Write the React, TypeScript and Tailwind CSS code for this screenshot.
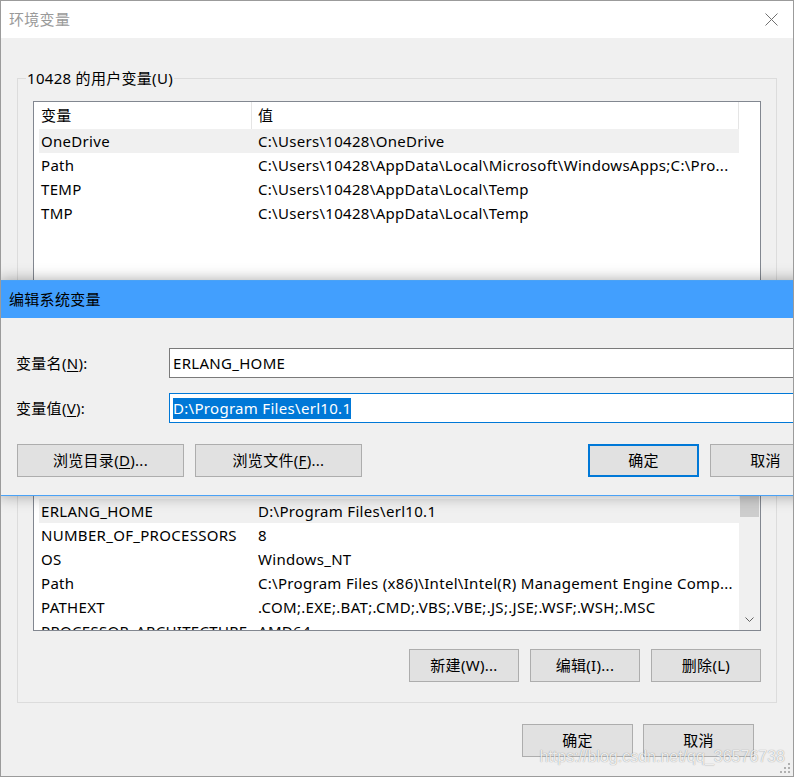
import React from "react";

type Row = [string, string];

const userVars: Row[] = [
  ["OneDrive", "C:\\Users\\10428\\OneDrive"],
  ["Path", "C:\\Users\\10428\\AppData\\Local\\Microsoft\\WindowsApps;C:\\Pro..."],
  ["TEMP", "C:\\Users\\10428\\AppData\\Local\\Temp"],
  ["TMP", "C:\\Users\\10428\\AppData\\Local\\Temp"],
];

const sysVars: Row[] = [
  ["ComSpec", "C:\\WINDOWS\\system32\\cmd.exe"],
  ["DriverData", "C:\\WINDOWS\\DriverData"],
  ["ERLANG_HOME", "D:\\Program Files\\erl10.1"],
  ["NUMBER_OF_PROCESSORS", "8"],
  ["OS", "Windows_NT"],
  ["Path", "C:\\Program Files (x86)\\Intel\\Intel(R) Management Engine Comp..."],
  ["PATHEXT", ".COM;.EXE;.BAT;.CMD;.VBS;.VBE;.JS;.JSE;.WSF;.WSH;.MSC"],
  ["PROCESSOR_ARCHITECTURE", "AMD64"],
];

function Scrollbar() {
  return (
    <div className="w-[21px] shrink-0 bg-[#f0f0f0] flex flex-col">
      <div className="h-[21px] shrink-0 flex items-center justify-center">
        <svg width="9" height="5" viewBox="0 0 9 5">
          <path d="M0.5 4.5 L4.5 0.5 L8.5 4.5" fill="none" stroke="#606060" strokeWidth="1" />
        </svg>
      </div>
      <div className="mx-px h-[72px] shrink-0 bg-[#cdcdcd]" />
      <div className="flex-1" />
      <div className="h-[21px] shrink-0 flex items-center justify-center">
        <svg width="9" height="5" viewBox="0 0 9 5">
          <path d="M0.5 0.5 L4.5 4.5 L8.5 0.5" fill="none" stroke="#606060" strokeWidth="1" />
        </svg>
      </div>
    </div>
  );
}

function ListBox({ rows, selected, scrollbar }: { rows: Row[]; selected: number; scrollbar?: boolean }) {
  return (
    <div className="h-[208px] shrink-0 border border-[#828790] bg-white flex overflow-hidden">
      <div className="ml-[5px] w-[700px] shrink-0 flex flex-col overflow-hidden">
        <div className="h-[27px] shrink-0 flex">
          <div className="w-[213px] shrink-0 border-r border-[#e5e5e5] pl-[2px] flex items-center">变量</div>
          <div className="flex-1 border-r border-[#e5e5e5] pl-[6px] flex items-center">值</div>
        </div>
        {rows.map((r, i) => (
          <div
            key={i}
            className={
              "h-[24px] shrink-0 flex items-center whitespace-nowrap " +
              (i === selected ? "bg-[#f0f0f0]" : "bg-white")
            }
          >
            <div className="w-[213px] shrink-0 pl-[2px] overflow-hidden">{r[0]}</div>
            <div className="flex-1 pl-[6px] overflow-hidden">{r[1]}</div>
          </div>
        ))}
      </div>
      {scrollbar ? <Scrollbar /> : <div className="w-[21px] shrink-0 bg-white" />}
    </div>
  );
}

function Btn({ children, w = "w-[110px]" }: { children: React.ReactNode; w?: string }) {
  return (
    <div className={w + " h-[33px] shrink-0 bg-[#e1e1e1] border border-[#adadad] flex items-center justify-center"}>
      {children}
    </div>
  );
}

function Group({ legend, rows, selected, scrollbar }: { legend: string; rows: Row[]; selected: number; scrollbar?: boolean }) {
  return (
    <div className="relative border border-[#dcdcdc] px-[15px] pt-[22px] pb-[20px] flex flex-col">
      <div className="absolute left-[8px] top-[-11px] px-px leading-[20px] bg-[#f0f0f0]">{legend}</div>
      <ListBox rows={rows} selected={selected} scrollbar={scrollbar} />
      <div className="mt-[18px] flex justify-end gap-[11px]">
        <Btn>新建(W)...</Btn>
        <Btn>编辑(I)...</Btn>
        <Btn>删除(L)</Btn>
      </div>
    </div>
  );
}

function EditDialog() {
  return (
    <div className="absolute top-[279px] left-[-2px] w-[1000px] h-[216px] bg-[#f0f0f0] border border-[#4aa2f6] shadow-[0_0_14px_rgba(0,0,0,0.35)] flex flex-col">
      <div className="h-[37px] shrink-0 bg-[#429ffe] flex items-center pl-[9px] text-black">编辑系统变量</div>
      <div className="mt-[30px] h-[30px] flex items-center">
        <div className="w-[169px] shrink-0 pl-[16px]">
          变量名(<span className="underline underline-offset-2">N</span>):
        </div>
        <div className="w-[640px] h-[30px] border border-[#7a7a7a] bg-white pl-[3px] flex items-center">ERLANG_HOME</div>
      </div>
      <div className="mt-[15px] h-[30px] flex items-center">
        <div className="w-[169px] shrink-0 pl-[16px]">
          变量值(<span className="underline underline-offset-2">V</span>):
        </div>
        <div className="w-[640px] h-[30px] border border-[#0078d7] bg-white pl-[3px] flex items-center">
          <span className="inline-block leading-[21px] bg-[#0078d7] text-white">D:\Program Files\erl10.1</span>
        </div>
      </div>
      <div className="mt-[21px] pl-[17px] flex gap-[11px]">
        <Btn w="w-[167px]">
          浏览目录(<span className="underline underline-offset-2">D</span>)...
        </Btn>
        <Btn w="w-[167px]">
          浏览文件(<span className="underline underline-offset-2">F</span>)...
        </Btn>
        <div className="ml-[215px] w-[111px] h-[33px] shrink-0 bg-[#e1e1e1] border-2 border-[#0078d7] flex items-center justify-center">
          确定
        </div>
        <Btn w="w-[111px]">取消</Btn>
      </div>
    </div>
  );
}

export default function App() {
  return (
    <div className="relative w-[794px] h-[777px] overflow-hidden border border-[#9b9b9b] bg-[#f0f0f0] text-[15px] tracking-[0.3px] text-black [font-family:'Noto_Sans','Noto_Sans_CJK_SC',sans-serif]">
      <div className="h-[37px] bg-white flex items-center justify-between pl-[8px] pr-[15px]">
        <span className="text-[#9a9a9a]">环境变量</span>
        <svg width="13" height="13" viewBox="0 0 13 13">
          <path d="M0.5 0.5 L12.5 12.5 M12.5 0.5 L0.5 12.5" stroke="#707070" strokeWidth="1" fill="none" />
        </svg>
      </div>
      <div className="px-[16px] pt-[40px] flex flex-col">
        <Group legend="10428 的用户变量(U)" rows={userVars} selected={0} />
        <div className="mt-[19px]">
          <Group legend="系统变量(S)" rows={sysVars} selected={2} scrollbar />
        </div>
        <div className="mt-[21px] pr-[23px] flex justify-end gap-[10px]">
          <Btn w="w-[111px]">确定</Btn>
          <Btn w="w-[111px]">取消</Btn>
        </div>
      </div>

      <EditDialog />

      <div className="absolute right-[8px] bottom-[9px] text-[16px] leading-[20px] tracking-normal text-[rgba(255,255,255,0.85)] [font-family:'Liberation_Sans',Arial,sans-serif] [text-shadow:0_0_1px_rgba(0,0,0,0.45)]">
        https://blog.csdn.net/qq_36576738
      </div>
      <svg className="absolute right-[2px] bottom-[2px]" width="11" height="11" viewBox="0 0 11 11">
        <rect x="8" y="0" width="2" height="2" fill="#b0b0b0" />
        <rect x="4" y="4" width="2" height="2" fill="#b0b0b0" />
        <rect x="8" y="4" width="2" height="2" fill="#b0b0b0" />
        <rect x="0" y="8" width="2" height="2" fill="#b0b0b0" />
        <rect x="4" y="8" width="2" height="2" fill="#b0b0b0" />
        <rect x="8" y="8" width="2" height="2" fill="#b0b0b0" />
      </svg>
    </div>
  );
}
